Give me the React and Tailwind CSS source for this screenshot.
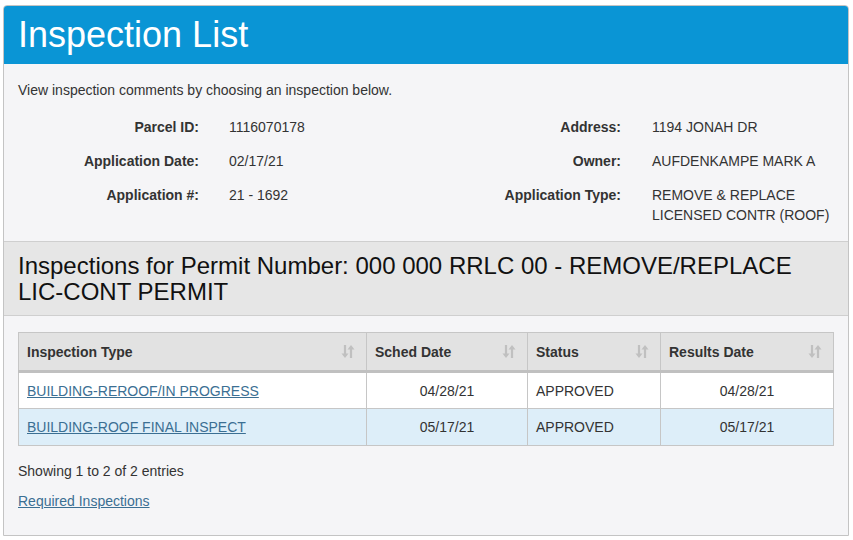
import React from 'react';

const info = [
  { label: 'Parcel ID:', value: '1116070178', label2: 'Address:', value2: '1194 JONAH DR' },
  { label: 'Application Date:', value: '02/17/21', label2: 'Owner:', value2: 'AUFDENKAMPE MARK A' },
  { label: 'Application #:', value: '21 - 1692', label2: 'Application Type:', value2: ['REMOVE & REPLACE', 'LICENSED CONTR (ROOF)'] },
];

const rows = [
  { type: 'BUILDING-REROOF/IN PROGRESS', sched: '04/28/21', status: 'APPROVED', result: '04/28/21', bg: 'bg-white' },
  { type: 'BUILDING-ROOF FINAL INSPECT', sched: '05/17/21', status: 'APPROVED', result: '05/17/21', bg: 'bg-[#ddeef9]' },
];

function SortIcon() {
  return (
    <svg width="14" height="15" viewBox="0 0 14 15" className="shrink-0">
      <g fill="none" stroke="#c0c0c0" strokeWidth="2.2">
        <path d="M4 1v11" />
        <path d="M10 14V3" />
      </g>
      <path d="M0.5 9.5h7l-3.5 4.5z" fill="#c0c0c0" />
      <path d="M6.5 5.5h7l-3.5-4.5z" fill="#c0c0c0" />
    </svg>
  );
}

function Th({ children, className = '' }) {
  return (
    <th className={`border-r border-[#c6c6c6] last:border-r-0 px-2 h-[39px] text-left font-bold ${className}`}>
      <div className="flex items-center justify-between pr-[3px]">
        <span>{children}</span>
        <SortIcon />
      </div>
    </th>
  );
}

export default function App() {
  return (
    <div className="w-[853px] h-[540px] bg-white pt-[5px] pl-[3px]" style={{ fontFamily: '"Liberation Sans", Arial, sans-serif' }}>
      <div className="w-[846px] h-[531px] border border-[#c4c4c4] rounded-t-[4px] bg-[#f5f5f7] text-[#333] text-[14px] leading-[20px] overflow-hidden">
        <div className="bg-[#0a95d5] h-[59px] -mt-px -mx-px rounded-t-[4px] px-[15px] flex items-center">
          <h1 className="text-white text-[36px] leading-[40px] pt-[1px]">Inspection List</h1>
        </div>

        <div className="px-[14px] pt-[16px] pb-[16px]">
          <p>View inspection comments by choosing an inspection below.</p>
          <div className="mt-[17px] flex flex-col gap-[14px]">
            {info.map((r) => (
              <div key={r.label} className="grid grid-cols-[415px_1fr]">
                <div className="flex">
                  <div className="w-[181px] text-right font-bold">{r.label}</div>
                  <div className="ml-[30px]">{r.value}</div>
                </div>
                <div className="flex">
                  <div className="w-[188px] text-right font-bold">{r.label2}</div>
                  <div className="ml-[31px]">
                    {Array.isArray(r.value2) ? r.value2.map((v) => <div key={v}>{v}</div>) : r.value2}
                  </div>
                </div>
              </div>
            ))}
          </div>
        </div>

        <div className="bg-[#e6e6e6] border-y border-[#cfcfcf] px-[14px] pt-[11px] pb-[10px]">
          <h2 className="text-[24px] leading-[26px] text-[#111]">
            Inspections for Permit Number: 000 000 RRLC 00 - REMOVE/REPLACE <span className="whitespace-nowrap">LIC-CONT PERMIT</span>
          </h2>
        </div>

        <div className="px-[14px] pt-[16px]">
          <table className="w-[816px] border border-[#c6c6c6] border-collapse text-[14px]">
            <thead>
              <tr className="bg-[#e2e2e2] border-b-[3px] border-[#c0c0c0]">
                <Th className="w-[348px]">Inspection Type</Th>
                <Th className="w-[161px]">Sched Date</Th>
                <Th className="w-[133px]">Status</Th>
                <Th>Results Date</Th>
              </tr>
            </thead>
            <tbody>
              {rows.map((r) => (
                <tr key={r.type} className={`${r.bg} border-t border-[#c6c6c6] h-[37px]`}>
                  <td className="px-2 h-[37px] border-r border-[#c6c6c6]">
                    <a href="#" className="text-[#3b6f93] underline">{r.type}</a>
                  </td>
                  <td className="px-2 border-r border-[#c6c6c6] text-center">{r.sched}</td>
                  <td className="px-2 border-r border-[#c6c6c6]">{r.status}</td>
                  <td className="px-2 text-center">{r.result}</td>
                </tr>
              ))}
            </tbody>
          </table>
          <p className="mt-[15px]">Showing 1 to 2 of 2 entries</p>
          <a href="#" className="block mt-[10px] text-[#3b6f93] underline">Required Inspections</a>
        </div>
      </div>
    </div>
  );
}
